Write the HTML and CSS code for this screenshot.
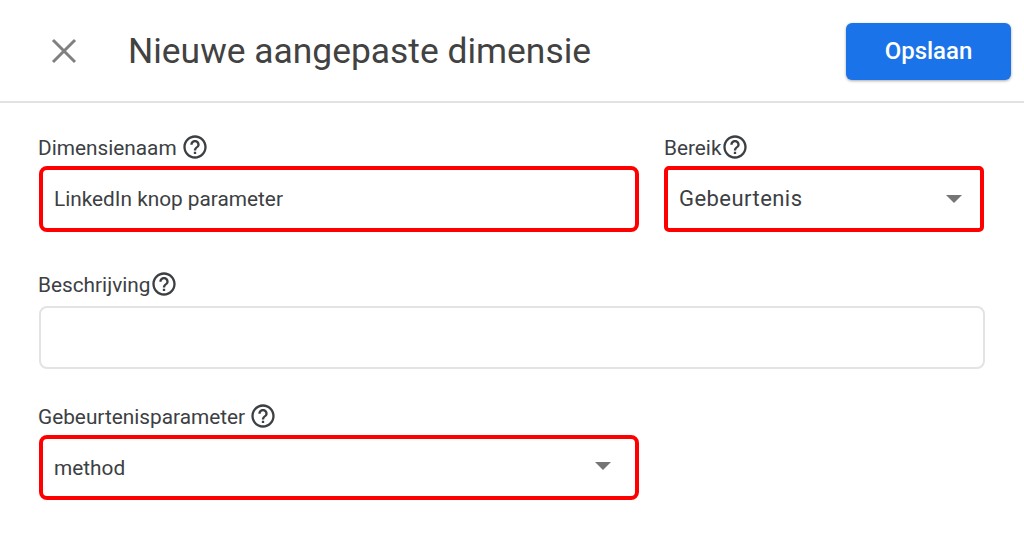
FILE: index.html
```html
<!DOCTYPE html>
<html lang="en">

<head>
    <meta charset="UTF-8">
    <meta name="viewport" content="width=device-width, initial-scale=1.0">
    <title>Nieuwe aangepaste dimensie</title>
    <link rel="stylesheet" href="styles.css">
</head>

<body>
    <header class="topbar">
        <button class="close-button" aria-label="Sluiten">
            <svg width="26" height="26" viewBox="0 0 26 26">
                <path d="M2 2 L24 24 M24 2 L2 24" />
            </svg>
        </button>
        <h1>Nieuwe aangepaste dimensie</h1>
        <button class="save-button">Opslaan</button>
    </header>

    <main class="form">
        <div class="row">
            <div class="field">
                <div class="field-label">
                    <span class="label-gap">Dimensienaam</span>
                    <svg class="help" viewBox="0 0 24 24"><path d="M11 18h2v-2h-2v2zm1-16C6.48 2 2 6.48 2 12s4.48 10 10 10 10-4.48 10-10S17.52 2 12 2zm0 18c-4.41 0-8-3.59-8-8s3.59-8 8-8 8 3.59 8 8-3.59 8-8 8zm0-14c-2.21 0-4 1.79-4 4h2c0-1.1.9-2 2-2s2 .9 2 2c0 2-3 1.75-3 5h2c0-2.25 3-2.5 3-5 0-2.21-1.79-4-4-4z" /></svg>
                </div>
                <div class="box highlighted">LinkedIn knop parameter</div>
            </div>
            <div class="field">
                <div class="field-label scope-label">
                    <span>Bereik</span>
                    <svg class="help" viewBox="0 0 24 24"><path d="M11 18h2v-2h-2v2zm1-16C6.48 2 2 6.48 2 12s4.48 10 10 10 10-4.48 10-10S17.52 2 12 2zm0 18c-4.41 0-8-3.59-8-8s3.59-8 8-8 8 3.59 8 8-3.59 8-8 8zm0-14c-2.21 0-4 1.79-4 4h2c0-1.1.9-2 2-2s2 .9 2 2c0 2-3 1.75-3 5h2c0-2.25 3-2.5 3-5 0-2.21-1.79-4-4-4z" /></svg>
                </div>
                <div class="box highlighted select scope-select">Gebeurtenis<span class="arrow"></span></div>
            </div>
        </div>

        <div class="field description">
            <div class="field-label">
                <span>Beschrijving</span>
                <svg class="help" viewBox="0 0 24 24"><path d="M11 18h2v-2h-2v2zm1-16C6.48 2 2 6.48 2 12s4.48 10 10 10 10-4.48 10-10S17.52 2 12 2zm0 18c-4.41 0-8-3.59-8-8s3.59-8 8-8 8 3.59 8 8-3.59 8-8 8zm0-14c-2.21 0-4 1.79-4 4h2c0-1.1.9-2 2-2s2 .9 2 2c0 2-3 1.75-3 5h2c0-2.25 3-2.5 3-5 0-2.21-1.79-4-4-4z" /></svg>
            </div>
            <div class="box plain"></div>
        </div>

        <div class="row parameter">
            <div class="field">
                <div class="field-label">
                    <span class="label-gap">Gebeurtenisparameter</span>
                    <svg class="help" viewBox="0 0 24 24"><path d="M11 18h2v-2h-2v2zm1-16C6.48 2 2 6.48 2 12s4.48 10 10 10 10-4.48 10-10S17.52 2 12 2zm0 18c-4.41 0-8-3.59-8-8s3.59-8 8-8 8 3.59 8 8-3.59 8-8 8zm0-14c-2.21 0-4 1.79-4 4h2c0-1.1.9-2 2-2s2 .9 2 2c0 2-3 1.75-3 5h2c0-2.25 3-2.5 3-5 0-2.21-1.79-4-4-4z" /></svg>
                </div>
                <div class="box highlighted select">method<span class="arrow"></span></div>
            </div>
        </div>
    </main>
</body>

</html>
```

FILE: styles.css
```css
body {
    font-family: Roboto, Arial, sans-serif;
    margin: 0;
    padding: 0;
    background-color: #ffffff;
    color: #3c4043;
}

.topbar {
    display: flex;
    align-items: center;
    height: 101px;
    padding: 0 13px 0 51px;
    border-bottom: 2px solid #e2e2e2;
}

.close-button {
    display: flex;
    width: 26px;
    height: 26px;
    padding: 0;
    border: none;
    background: none;
}

.close-button path {
    fill: none;
    stroke: #808080;
    stroke-width: 3;
}

.topbar h1 {
    flex: 1;
    margin: 0 0 0 51px;
    font-size: 35.4px;
    font-weight: 400;
    color: #424242;
}

.save-button {
    width: 165px;
    height: 57px;
    margin-top: 1px;
    border: none;
    border-radius: 6px;
    background-color: #1a73e8;
    color: #ffffff;
    font-family: Roboto, Arial, sans-serif;
    font-size: 24px;
    font-weight: 500;
    box-shadow: 0 1px 3px rgba(0, 0, 0, 0.35);
}

.form {
    padding: 32px 39px 0;
}

.row {
    display: grid;
    grid-template-columns: 600px 320px;
    column-gap: 25px;
}

.description {
    margin-top: 40px;
}

.description .field-label {
    margin-bottom: 3px;
}

.parameter {
    margin-top: 35px;
}

.field-label {
    display: flex;
    align-items: center;
    height: 25px;
    margin-left: -1px;
    padding-bottom: 6px;
    font-size: 20.8px;
    color: #3c4043;
}

.scope-label {
    margin-left: 0;
}

.label-gap {
    margin-right: 4px;
}

.help {
    width: 28px;
    height: 28px;
    margin-top: -2px;
    fill: #3c4043;
}

.box {
    box-sizing: border-box;
    display: flex;
    align-items: center;
    justify-content: space-between;
    height: 66px;
    padding: 0 28px 0 11px;
    border-radius: 8px;
    font-size: 20.8px;
    color: #3c4043;
}

.highlighted {
    border: 4px solid #ff0000;
}

.plain {
    height: 63px;
    border: 2px solid #e3e3e3;
}

.select {
    padding-right: 24px;
}

.scope-select {
    padding-left: 11px;
    padding-right: 18px;
    padding-bottom: 1px;
    border-radius: 5px;
    font-size: 22px;
    letter-spacing: 0.45px;
}

.parameter .box {
    height: 65px;
}

.parameter .arrow {
    margin-bottom: 3px;
}

.arrow {
    width: 0;
    height: 0;
    border-left: 8px solid transparent;
    border-right: 8px solid transparent;
    border-top: 8px solid #757575;
}
```
